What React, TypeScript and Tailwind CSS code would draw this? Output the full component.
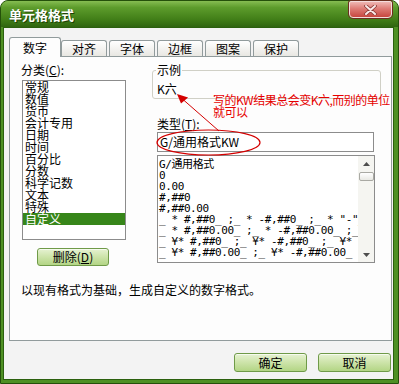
const CATEGORIES = ['常规', '数值', '货币', '会计专用', '日期', '时间', '百分比', '分数', '科学记数', '文本', '特殊', '自定义'];

const FORMATS = [
  'G/通用格式',
  '0',
  '0.00',
  '#,##0',
  '#,##0.00',
  '_ * #,##0_ ;_ * -#,##0_ ;_ * "-"_ ;_ @_ ',
  '_ * #,##0.00_ ;_ * -#,##0.00_ ;_ * "-"??_ ;_ @_ ',
  '_ ¥* #,##0_ ;_ ¥* -#,##0_ ;_ ¥* "-"_ ;_ @_ ',
  '_ ¥* #,##0.00_ ;_ ¥* -#,##0.00_ ;_ ¥* "-"??_ ;_ @_ ',
];

const TABS = ['对齐', '字体', '边框', '图案', '保护'];

const GreenButton = ({ children, className = '' }: { children: React.ReactNode; className?: string }) => (
  <div
    className={`flex items-center justify-center rounded-[3px] border border-[#6f9a48] bg-[linear-gradient(to_bottom,#e6f2d2_0%,#cfe5ad_45%,#b3d585_100%)] text-[12px] leading-[12px] text-black shadow-[inset_0_1px_0_#f6fbee] ${className}`}
  >
    {children}
  </div>
);

export default function App() {
  return (
    <div className="relative w-[399px] h-[384px] overflow-hidden bg-white font-['Noto_Sans_CJK_SC','Noto_Sans',sans-serif] text-black">
      <div className="flex flex-col w-full h-full rounded-t-[8px] border border-[#24500a] bg-[#4e9024]">
        {/* title bar */}
        <div className="flex justify-between h-[26px] rounded-t-[7px] bg-[linear-gradient(to_bottom,#86bd52_0%,#5d9c2c_25%,#427f18_70%,#2f6510_100%)] pl-[8px] pr-[6px]">
          <span className="self-center mt-[1px] text-white font-bold text-[13px] leading-[13px] [text-shadow:1px_1px_0_#1d4207]">
            单元格格式
          </span>
          <div className="flex items-center justify-center w-[43px] h-[17px] rounded-t-[2px] rounded-b-[4px] border border-[#f4dcdc] bg-[linear-gradient(to_bottom,#efb6b2_0%,#de7b75_45%,#c7473f_100%)] shadow-[0_0_0_1px_#6b2f1f]">
            <svg width="13" height="10" viewBox="0 0 13 10">
              <path d="M2 1 L11 9 M11 1 L2 9" stroke="#8a3b36" strokeWidth="3.6" strokeLinecap="round" />
              <path d="M2 1 L11 9 M11 1 L2 9" stroke="#fbeaea" strokeWidth="2" strokeLinecap="round" />
            </svg>
          </div>
        </div>

        {/* body */}
        <div className="flex flex-col flex-1 ml-[2px] mr-[4px] mb-[3px] border border-[#2b600e] bg-[#f3f3f3]">
          {/* tabs */}
          <div className="relative z-10 flex items-end h-[20px] -mb-px ml-[5px] mt-[9px] text-[12px] leading-[12px]">
            <div className="flex items-center justify-center w-[52px] h-[20px] rounded-t-[3px] border border-b-0 border-[#919b9c] bg-[#fdfdfd]">
              数字
            </div>
            <div className="flex gap-[2px]">
              {TABS.map(t => (
                <div
                  key={t}
                  className="flex items-center justify-center w-[46px] h-[16px] mb-px pt-px rounded-t-[3px] border border-b-0 border-[#919b9c] bg-[linear-gradient(to_bottom,#ffffff,#e8e7e2)]"
                >
                  {t}
                </div>
              ))}
            </div>
          </div>

          {/* panel */}
          <div className="flex flex-col ml-[5px] w-[383px] h-[285px] border border-[#919b9c] bg-[#fdfdfd] text-[12px] leading-[12px]">
            <div className="flex pl-[11px] pt-[7px]">
              {/* left column */}
              <div className="flex flex-col w-[106px]">
                <div className="h-[12px]">
                  分类(<span className="underline">C</span>):
                </div>
                <div className="mt-[4px] ml-px w-[104px] h-[160px] border border-[#8c8c8c] bg-white overflow-hidden">
                  {CATEGORIES.map(c => (
                    <div
                      key={c}
                      className={
                        c === '自定义'
                          ? 'h-[12px] pl-[2px] whitespace-nowrap bg-[#37861a] text-white'
                          : 'h-[12px] pl-[2px] whitespace-nowrap'
                      }
                    >
                      {c}
                    </div>
                  ))}
                </div>
                <GreenButton className="mt-[8px] ml-[16px] w-[72px] h-[18px]">
                  删除(<span className="underline">D</span>)
                </GreenButton>
              </div>

              {/* right column */}
              <div className="flex flex-col ml-[25px] w-[229px]">
                <fieldset className="border border-[#d0d0c6] rounded-[3px] pl-[3px] pb-[3px]">
                  <legend className="px-px h-[12px]">示例</legend>
                  <div className="pt-[7px] pl-px h-[19px]">K六</div>
                </fieldset>
                <div className="mt-[19px] ml-[5px] h-[12px]">
                  类型(<span className="underline">T</span>):
                </div>
                <div className="flex items-center mt-[2px] ml-[5px] w-[217px] h-[20px] pl-[2px] border border-[#8c8c8c] bg-white whitespace-nowrap">
                  G/通用格式KW
                </div>
                <div className="flex mt-[3px] ml-[5px] w-[218px] h-[108px] border border-[#8c8c8c] bg-white">
                  <div className="flex-1 overflow-hidden pt-[3px] pl-px font-['DejaVu_Sans_Mono','Noto_Sans_CJK_SC',monospace] text-[11px] leading-[11px] tracking-[-0.4px]">
                    {FORMATS.map(f => (
                      <div key={f} className="h-[11px] whitespace-pre">
                        {f}
                      </div>
                    ))}
                  </div>
                  <div className="flex flex-col items-center w-[16px] bg-[#f5f5f1]">
                    <div className="flex items-center justify-center h-[15px] w-full">
                      <svg width="7" height="4" viewBox="0 0 7 4">
                        <path d="M0 4 L3.5 0 L7 4 Z" fill="#4d4d4d" />
                      </svg>
                    </div>
                    <div className="w-[15px] h-[9px] mt-px rounded-[2px] border border-[#a9a9a3] bg-[linear-gradient(to_bottom,#ffffff,#e9e9e4)]" />
                    <div className="flex-1" />
                    <div className="flex items-center justify-center h-[15px] w-full">
                      <svg width="7" height="4" viewBox="0 0 7 4">
                        <path d="M0 0 L3.5 4 L7 0 Z" fill="#4d4d4d" />
                      </svg>
                    </div>
                  </div>
                </div>
              </div>
            </div>

            <div className="mt-[18px] pl-[11px] whitespace-nowrap">以现有格式为基础，生成自定义的数字格式。</div>
          </div>

          {/* bottom buttons */}
          <div className="flex justify-end gap-[11px] mt-[12px] mr-[2px]">
            <GreenButton className="w-[73px] h-[19px]">确定</GreenButton>
            <GreenButton className="w-[73px] h-[19px]">取消</GreenButton>
          </div>
        </div>
      </div>

      {/* red annotation */}
      <div className="absolute left-[213px] top-[94px] text-[12px] leading-[12px] tracking-[-0.5px] text-[#e60000] whitespace-nowrap">
        <div>写的KW结果总会变K六,而别的单位</div>
        <div>就可以</div>
      </div>
      <svg className="absolute left-0 top-0 pointer-events-none" width="399" height="384" viewBox="0 0 399 384">
        <ellipse cx="208.5" cy="142.5" rx="51.5" ry="12.5" fill="none" stroke="#d40000" strokeWidth="1.2" />
        <line x1="219" y1="131" x2="183" y2="99.5" stroke="#d40000" strokeWidth="1" />
        <path d="M177 94 L181 103.6 L188.1 97.6 Z" fill="#d40000" />
      </svg>
    </div>
  );
}
